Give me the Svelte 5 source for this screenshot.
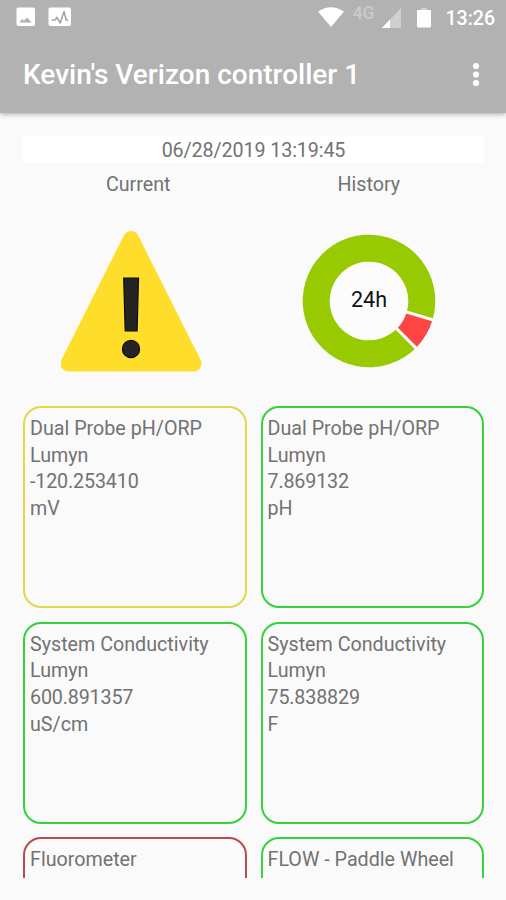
<script>
  const title = "Kevin's Verizon controller 1";
  const timestamp = '06/28/2019 13:19:45';

  const sensors = [
    { id: 1, name: 'Dual Probe pH/ORP', brand: 'Lumyn', value: '-120.253410', unit: 'mV', status: 'warning' },
    { id: 2, name: 'Dual Probe pH/ORP', brand: 'Lumyn', value: '7.869132', unit: 'pH', status: 'ok' },
    { id: 3, name: 'System Conductivity', brand: 'Lumyn', value: '600.891357', unit: 'uS/cm', status: 'ok' },
    { id: 4, name: 'System Conductivity', brand: 'Lumyn', value: '75.838829', unit: 'F', status: 'ok' },
    { id: 5, name: 'Fluorometer', status: 'alarm' },
    { id: 6, name: 'FLOW - Paddle Wheel', status: 'ok' },
  ];

  // angles in degrees, clockwise from three o'clock
  const alarmStart = 16.5;
  const alarmEnd = 45;

  function point(deg, r) {
    const a = (deg * Math.PI) / 180;
    return `${(r * Math.cos(a)).toFixed(2)} ${(r * Math.sin(a)).toFixed(2)}`;
  }

  function slice(from, to, outer, inner) {
    const large = to - from > 180 ? 1 : 0;
    return `M${point(from, outer)}A${outer} ${outer} 0 ${large} 1 ${point(to, outer)}L${point(to, inner)}A${inner} ${inner} 0 ${large} 0 ${point(from, inner)}Z`;
  }
</script>

<div class="screen">
  <header>
    <div class="status-bar">
      <div class="notifications">
        <svg width="20" height="20" viewBox="0 0 20 20">
          <rect x="0.5" y="0.5" width="18.5" height="18.5" rx="2" fill="#fff" />
          <path d="M3.5 15.5l2.500-3.500 2 1.800 3-3.300 4.800 5z" fill="#b2b2b2" />
        </svg>
        <svg width="24" height="20" viewBox="0 0 24 20">
          <rect x="0.5" y="0.5" width="22.5" height="18.5" rx="2" fill="#fff" />
          <path d="M3.5 13h3.700l1.700-2.600 3.300 5.600 3.800-11.500 2.300 8.500h2" fill="none" stroke="#a6a6a6" stroke-width="1.6" stroke-linejoin="round" />
        </svg>
      </div>
      <div class="signals">
        <svg class="wifi" width="26" height="20" viewBox="0 0 26 20">
          <path d="M0 4.5Q13-4 26 4.5L13 20z" fill="#fff" />
        </svg>
        <span class="network">4G</span>
        <svg class="cell" width="19" height="20" viewBox="0 0 19 20">
          <path d="M19 0v20H0z" fill="#cfcfcf" />
          <path d="M8 11.6v8.400H0z" fill="#fff" />
        </svg>
        <svg class="battery" width="14" height="20" viewBox="0 0 14 20">
          <rect x="4" width="6" height="3" fill="#d0d0d0" />
          <rect y="2" width="14" height="17.5" rx="1" fill="#fff" />
        </svg>
        <span class="clock">13:26</span>
      </div>
    </div>
    <div class="toolbar">
      <h1>{title}</h1>
      <button aria-label="More options">
        <svg width="8" height="24" viewBox="0 0 8 24">
          <circle cx="4" cy="3" r="3.1" fill="#fff" />
          <circle cx="4" cy="11.5" r="3.1" fill="#fff" />
          <circle cx="4" cy="20" r="3.1" fill="#fff" />
        </svg>
      </button>
    </div>
  </header>

  <main>
    <div class="timestamp">{timestamp}</div>

    <div class="overview">
      <section>
        <h2>Current</h2>
        <svg width="142" height="142" viewBox="0 0 142 142">
          <path d="M70 9L132.500 133.500H7.500z" fill="#ffdd2b" stroke="#ffdd2b" stroke-width="16" stroke-linejoin="round" />
          <path d="M62.700 48h14.800l-1.400 53h-11.900z" fill="#252423" stroke="#0b0a05" stroke-width="1.2" />
          <circle cx="70" cy="119" r="8.6" fill="#252423" stroke="#0b0a05" stroke-width="1.2" />
        </svg>
      </section>
      <section>
        <h2>History</h2>
        <svg width="142" height="142" viewBox="-71 -71 142 142">
          <circle r="41" fill="#fcfcfc" />
          <path d={slice(alarmEnd, alarmStart + 360, 66.3, 39.3)} fill="#97ca00" />
          <path d={slice(alarmStart, alarmEnd, 66.3, 39.3)} fill="#ff4444" />
          {#each [alarmStart, alarmEnd] as angle}
            <path d="M{point(angle, 38)}L{point(angle, 68)}" stroke="#fcfcfc" stroke-width="3" />
          {/each}
          <text y="5.5" text-anchor="middle">24h</text>
        </svg>
      </section>
    </div>

    <div class="sensors">
      {#each sensors as sensor (sensor.id)}
        <div class="card {sensor.status}">
          <div>{sensor.name}</div>
          {#if sensor.value}
            <div>{sensor.brand}</div>
            <div class="value">{sensor.value}</div>
            <div>{sensor.unit}</div>
          {/if}
        </div>
      {/each}
    </div>
  </main>
</div>

<style>
  .screen {
    display: flex;
    flex-direction: column;
    box-sizing: border-box;
    width: 506px;
    height: 900px;
    padding-bottom: 22px;
    overflow: hidden;
    background: #fafafa;
    color: #727272;
    font-family: Roboto, sans-serif;
    font-size: 19.7px;
    line-height: 26.7px;
  }

  svg {
    display: block;
  }

  header {
    flex: none;
    height: 113px;
    background: #b2b2b2;
    box-shadow: 0 1px 5px rgba(0, 0, 0, 0.35);
    color: #fff;
  }

  .status-bar {
    display: flex;
    justify-content: space-between;
    height: 36px;
    padding: 0 11px 0 16px;
  }

  .notifications {
    display: flex;
    gap: 12px;
    padding-top: 7px;
  }

  .signals {
    display: flex;
    align-items: flex-start;
  }

  .wifi {
    margin-top: 7px;
  }

  .cell,
  .battery {
    margin-top: 8px;
  }

  .network {
    margin: 3px 7px 0 9px;
    color: #cacaca;
    font-size: 17.5px;
    font-weight: 500;
    line-height: 20px;
  }

  .battery {
    margin-left: 16px;
  }

  .clock {
    margin-left: 15px;
    padding-top: 6px;
    font-size: 19.5px;
    font-weight: 500;
  }

  .toolbar {
    display: flex;
    align-items: center;
    justify-content: space-between;
    height: 77px;
    padding: 0 26px 0 23px;
  }

  h1 {
    margin: 0;
    padding-top: 2px;
    font-size: 28px;
    font-weight: 500;
  }

  button {
    padding: 0;
    border: 0;
    background: none;
  }

  main {
    display: flex;
    flex: 1;
    flex-direction: column;
    min-height: 0;
    padding: 23px 22px 0 23px;
    overflow: hidden;
  }

  .timestamp {
    flex: none;
    height: 27px;
    background: #fff;
    letter-spacing: -0.1px;
    line-height: 29px;
    text-align: center;
  }

  .overview {
    display: flex;
    flex: none;
    height: 243px;
  }

  section {
    display: flex;
    flex: 1;
    flex-direction: column;
    align-items: center;
    padding-top: 9px;
  }

  section svg {
    margin-top: 31px;
    margin-right: 12px;
  }

  section + section svg {
    margin-right: 0;
  }

  h2 {
    margin: 0;
    font-size: 19.7px;
    font-weight: 400;
  }

  text {
    fill: #111;
    font-size: 21.5px;
  }

  .sensors {
    display: grid;
    grid-template-columns: 1fr 1fr;
    grid-auto-rows: 202px;
    gap: 13.5px 14px;
  }

  .card {
    padding: 8px 5px;
    border: 2px solid #35d23c;
    border-radius: 18px;
    box-sizing: border-box;
  }

  .value {
    letter-spacing: -0.15px;
  }

  .warning {
    border-color: #e2d94a;
  }

  .alarm {
    border-color: #b84a50;
  }
</style>
